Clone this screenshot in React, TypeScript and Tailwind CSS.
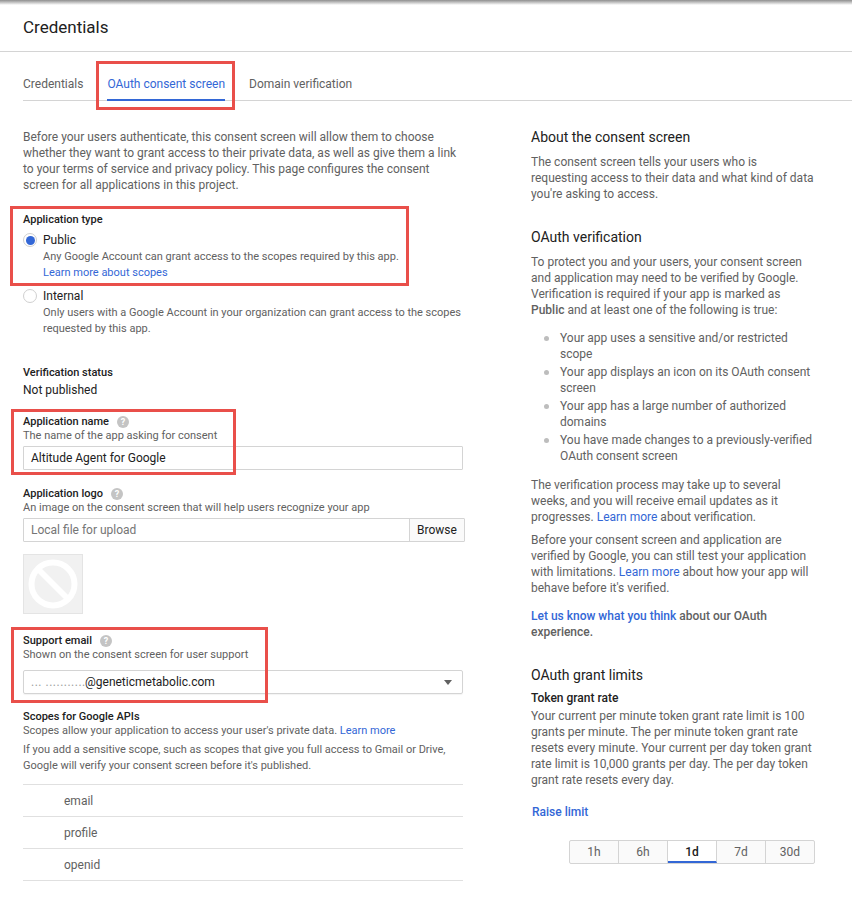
import React from 'react';

const Help = () => (
  <span className="inline-flex w-3 h-3 rounded-full bg-[#c4c4c4] text-white text-[9px] font-bold items-center justify-center ml-2 leading-none">?</span>
);

const Field = ({ label, help, hint }: { label: string; help?: boolean; hint: string }) => (
  <div>
    <div className="h-[14px] flex items-center text-[11px] font-medium text-[#212121]">
      {label}
      {help && <Help />}
    </div>
    <div className="h-[14px] leading-[14px] text-[#616161] text-[11px]">{hint}</div>
  </div>
);

const Heading = ({ children }: { children: React.ReactNode }) => (
  <h3 className="text-[14px] leading-[20px] font-normal text-[#212121]">{children}</h3>
);

const Link = ({ children }: { children: React.ReactNode }) => (
  <span className="text-[#3367d6]">{children}</span>
);

const Bullet = ({ children }: { children: React.ReactNode }) => (
  <li className="flex">
    <span className="w-[5px] h-[5px] rounded-full bg-[#bdbdbd] mt-[6px] mr-[11px] ml-[13px] shrink-0" />
    <span>{children}</span>
  </li>
);

export default function App() {
  return (
    <div className="relative w-[852px] h-[907px] bg-white overflow-hidden text-[#212121]" style={{ fontFamily: 'Roboto, sans-serif' }}>
      <div className="h-[5px] bg-gradient-to-b from-[#8f8f8f] to-white" />

      <header className="h-[47px] flex items-center pl-[23px] border-b border-[#d4d4d4] text-[17px]">Credentials</header>

      <nav className="ml-[23px] h-[49px] flex border-b border-[#d4d4d4] text-[12px] text-[#616161]">
        <div className="pt-[23px]">Credentials</div>
        <div className="ml-[24px] pt-[23px] h-[49px] border-b-2 border-[#3367d6] text-[#3367d6]">OAuth consent screen</div>
        <div className="ml-[24px] pt-[23px]">Domain verification</div>
      </nav>

      <div className="flex pl-[23px]">
        <main className="w-[442px] shrink-0 text-[11px]">
          <p className="mt-[28px] text-[12px] leading-[16px] text-[#616161] w-[440px]">
            Before your users authenticate, this consent screen will allow them to choose whether they want to grant access to their private data, as well as give them a link to your terms of service and privacy policy. This page configures the consent screen for all applications in this project.
          </p>

          <div className="mt-[20px] h-[14px] leading-[14px] font-medium">Application type</div>
          <div className="mt-[5px] flex">
            <span className="w-[14px] h-[14px] mt-[1px] rounded-full border border-[#d0d0d0] flex items-center justify-center shrink-0">
              <span className="w-[9px] h-[9px] rounded-full bg-[#3367d6]" />
            </span>
            <div className="ml-[6px]">
              <div className="text-[12px] leading-[16px]">Public</div>
              <div className="text-[#616161] leading-[16px] pt-[1px]">Any Google Account can grant access to the scopes required by this app.</div>
              <div className="leading-[16px]"><Link>Learn more about scopes</Link></div>
            </div>
          </div>
          <div className="mt-[7px] flex">
            <span className="w-[14px] h-[14px] mt-[1px] rounded-full border border-[#d0d0d0] shrink-0" />
            <div className="ml-[6px]">
              <div className="text-[12px] leading-[16px]">Internal</div>
              <div className="text-[#616161] leading-[16px] pt-[1px]">Only users with a Google Account in your organization can grant access to the scopes requested by this app.</div>
            </div>
          </div>

          <div className="mt-[29px] h-[14px] leading-[14px] font-medium">Verification status</div>
          <div className="mt-[2px] text-[12px] leading-[16px]">Not published</div>

          <div className="mt-[17px]"><Field label="Application name" help hint="The name of the app asking for consent" /></div>
          <div className="mt-[3px] w-[440px] h-[24px] border border-[#d4d4d4] rounded-[1px] flex items-center pl-[7px] text-[12px]">Altitude Agent for Google</div>

          <div className="mt-[17px]"><Field label="Application logo" help hint="An image on the consent screen that will help users recognize your app" /></div>
          <div className="mt-[3px] w-[442px] h-[24px] border border-[#d4d4d4] rounded-[1px] flex items-center text-[12px]">
            <span className="flex-1 pl-[7px] text-[#757575]">Local file for upload</span>
            <span className="w-[55px] h-full flex items-center justify-center border-l border-[#d4d4d4] bg-[#fafafa]">Browse</span>
          </div>
          <div className="mt-[12px] w-[60px] h-[60px] bg-[#f1f1f1] border border-[#e4e4e4] flex items-center justify-center">
            <svg width="50" height="50" viewBox="0 0 50 50" fill="none" stroke="#ffffff" strokeWidth="6">
              <circle cx="25" cy="25" r="21.5" />
              <path d="M10 10 L40 40" />
            </svg>
          </div>

          <div className="mt-[20px]"><Field label="Support email" help hint="Shown on the consent screen for user support" /></div>
          <div className="mt-[8px] w-[440px] h-[24px] border border-[#d4d4d4] rounded-[2px] flex items-center justify-between pl-[7px] pr-[10px] text-[12px] shadow-[0_1px_1px_rgba(0,0,0,0.05)]">
            <span className="flex items-center">
              <span className="w-[54px] whitespace-nowrap text-[#9e9e9e] tracking-[0.5px]">... ...........</span>
              @geneticmetabolic.com
            </span>
            <span className="w-0 h-0 border-x-[4px] border-x-transparent border-t-[5px] border-t-[#616161]" />
          </div>

          <div className="mt-[16px] h-[14px] leading-[14px] font-medium">Scopes for Google APIs</div>
          <div className="leading-[14px] text-[#616161]">Scopes allow your application to access your user's private data. <Link>Learn more</Link></div>
          <p className="mt-[4px] w-[440px] leading-[16px] text-[#616161]">If you add a sensitive scope, such as scopes that give you full access to Gmail or Drive, Google will verify your consent screen before it's published.</p>
          <ul className="mt-[10px] w-[440px] border-t border-[#e0e0e0] text-[12px] text-[#616161]">
            {['email', 'profile', 'openid'].map((s) => (
              <li key={s} className="h-[32px] flex items-center pl-[41px] border-b border-[#e0e0e0]">{s}</li>
            ))}
          </ul>
        </main>

        <aside className="ml-[66px] w-[284px] text-[12px] leading-[16px] text-[#616161]">
          <div className="mt-[26px]"><Heading>About the consent screen</Heading></div>
          <p className="mt-[7px]">The consent screen tells your users who is requesting access to their data and what kind of data you're asking to access.</p>

          <div className="mt-[25px]"><Heading>OAuth verification</Heading></div>
          <p className="mt-[7px]">To protect you and your users, your consent screen and application may need to be verified by Google. Verification is required if your app is marked as <b className="font-medium">Public</b> and at least one of the following is true:</p>
          <ul className="mt-[12px] flex flex-col gap-[2px]">
            <Bullet>Your app uses a sensitive and/or restricted scope</Bullet>
            <Bullet>Your app displays an icon on its OAuth consent screen</Bullet>
            <Bullet>Your app has a large number of authorized domains</Bullet>
            <Bullet>You have made changes to a previously-verified OAuth consent screen</Bullet>
          </ul>
          <p className="mt-[13px]">The verification process may take up to several weeks, and you will receive email updates as it progresses. <Link>Learn more</Link> about verification.</p>
          <p className="mt-[7px]">Before your consent screen and application are verified by Google, you can still test your application with limitations. <Link>Learn more</Link> about how your app will behave before it's verified.</p>
          <p className="mt-[12px] font-medium"><Link>Let us know what you think</Link> about our OAuth experience.</p>

          <div className="mt-[25px]"><Heading>OAuth grant limits</Heading></div>
          <div className="mt-[5px] font-medium text-[#212121]">Token grant rate</div>
          <p className="mt-[2px]">Your current per minute token grant rate limit is 100 grants per minute. The per minute token grant rate resets every minute. Your current per day token grant rate limit is 10,000 grants per day. The per day token grant rate resets every day.</p>
          <div className="mt-[16px] ml-[1px] font-medium"><Link>Raise limit</Link></div>

          <div className="mt-[20px] ml-[38px] w-[246px] h-[24px] flex border border-[#d4d4d4] rounded-[2px] bg-[#fafafa] text-center leading-[22px]">
            <span className="flex-1 border-r border-[#d4d4d4]">1h</span>
            <span className="flex-1 border-r border-[#d4d4d4]">6h</span>
            <span className="flex-1 border-r border-[#d4d4d4] border-b-2 border-b-[#3367d6] bg-white font-medium text-[#212121]">1d</span>
            <span className="flex-1 border-r border-[#d4d4d4]">7d</span>
            <span className="flex-1">30d</span>
          </div>
        </aside>
      </div>

      {/* red annotation boxes drawn on top of the screenshot */}
      <div className="absolute left-[96px] top-[61px] w-[139px] h-[49px] border-[3px] border-[#e94f4a]" />
      <div className="absolute left-[10px] top-[206px] w-[399px] h-[80px] border-[3px] border-[#e94f4a]" />
      <div className="absolute left-[11px] top-[409px] w-[225px] h-[66px] border-[3px] border-[#e94f4a]" />
      <div className="absolute left-[11px] top-[627px] w-[257px] h-[76px] border-[3px] border-[#e94f4a]" />
    </div>
  );
}
